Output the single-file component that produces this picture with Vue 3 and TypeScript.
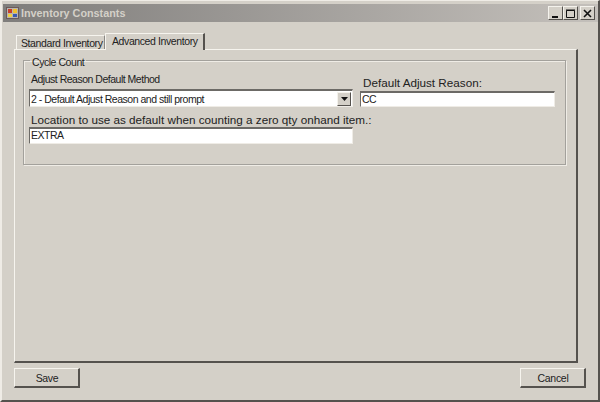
<script setup lang="ts">
const title = 'Inventory Constants'
const tabs = [
  { label: 'Standard Inventory', active: false },
  { label: 'Advanced Inventory', active: true },
]
</script>

<template>
  <div class="window">
    <header class="titlebar">
      <svg class="app-icon" width="13" height="12" viewBox="0 0 13 12">
        <rect x="0.5" y="0.5" width="12" height="11" fill="#b9b4b0" stroke="#6a5a5a" />
        <rect x="2" y="2" width="4" height="4" fill="#c8402c" />
        <rect x="7" y="2" width="4" height="4" fill="#f0c030" />
        <rect x="2" y="7" width="4" height="3" fill="#f0d040" />
        <rect x="7" y="7" width="4" height="3" fill="#3c5ab0" />
      </svg>
      <span class="title">{{ title }}</span>
      <div class="caption-btns">
        <button class="cap-btn">
          <svg width="9" height="9" viewBox="0 0 9 9"><rect x="1" y="7" width="6" height="2" fill="#111" /></svg>
        </button>
        <button class="cap-btn">
          <svg width="9" height="9" viewBox="0 0 9 9"><path d="M0.5 1.5h8v7h-8z M0 1h9" fill="none" stroke="#111" /></svg>
        </button>
        <button class="cap-btn close">
          <svg width="9" height="9" viewBox="0 0 9 9"><path d="M1 1l7 7M8 1l-7 7" fill="none" stroke="#111" stroke-width="1.6" /></svg>
        </button>
      </div>
    </header>

    <main class="client">
      <div class="tabstrip">
        <div v-for="t in tabs" :key="t.label" class="tab" :class="{ active: t.active }">{{ t.label }}</div>
      </div>

      <section class="tabpanel">
        <fieldset class="group">
          <legend>Cycle Count</legend>
          <div class="row-top">
            <div class="field-left">
              <label class="small">Adjust Reason Default Method</label>
              <div class="combo">
                <span class="combo-text">2 - Default Adjust Reason and still prompt</span>
                <span class="combo-arrow">
                  <svg width="7" height="4" viewBox="0 0 7 4"><path d="M0 0h7L3.5 4z" fill="#111" /></svg>
                </span>
              </div>
            </div>
            <div class="field-right">
              <label class="big">Default Adjust Reason:</label>
              <div class="textbox">CC</div>
            </div>
          </div>
          <div class="field-left second">
            <label class="big">Location to use as default when counting a zero qty onhand item.:</label>
            <div class="textbox">EXTRA</div>
          </div>
        </fieldset>
      </section>

      <footer class="actions">
        <button class="btn">Save</button>
        <button class="btn">Cancel</button>
      </footer>
    </main>
  </div>
</template>

<style>
html, body { margin: 0; background: #d4d0c8; }
</style>

<style scoped>
.window {
  box-sizing: border-box;
  width: 600px;
  height: 402px;
  display: flex;
  flex-direction: column;
  background: #d4d0c8;
  border-top: 1px solid #efece6;
  border-left: 2px solid #efece6;
  border-right: 2px solid #55524e;
  border-bottom: 2px solid #55524e;
  padding: 3px 0 0 1px;
  font-family: "Liberation Sans", Arial, sans-serif;
  color: #222;
}
.titlebar {
  flex: none;
  height: 18px;
  display: flex;
  align-items: center;
  background: linear-gradient(90deg, #7f7d7b, #c4c0bb);
  padding: 0 3px 0 3px;
}
.app-icon { flex: none; }
.title {
  margin-left: 2px;
  font: bold 10.8px "Liberation Sans", Arial, sans-serif;
  color: #d4d0c8;
}
.caption-btns {
  margin-left: auto;
  display: flex;
  gap: 0;
}
.cap-btn {
  box-sizing: border-box;
  width: 15px;
  height: 14px;
  padding: 0;
  display: flex;
  align-items: center;
  justify-content: center;
  background: #d4d0c8;
  border: 1px solid;
  border-color: #f4f2ec #55524e #55524e #f4f2ec;
}
.close { margin-left: 2px; }

.client {
  flex: 1;
  min-height: 0;
  display: flex;
  flex-direction: column;
  padding: 10px 12px 0 11px;
}
.tabstrip {
  flex: none;
  height: 17px;
  display: flex;
  align-items: flex-end;
  padding-left: 2px;
}
.tab {
  box-sizing: border-box;
  height: 14px;
  padding: 0 4px;
  font-size: 10.5px;
  letter-spacing: -0.4px;
  line-height: 14px;
  white-space: nowrap;
  border-top: 1px solid #f6f4ee;
  border-left: 1px solid #f6f4ee;
  border-right: 1px solid #8a8884;
  width: 89px;
}
.tab.active {
  width: 100px;
  height: 17px;
  line-height: 14px;
  padding-left: 6px;
  border-right: 2px solid #55524e;
  background: #d4d0c8;
  margin-bottom: -1px;
  position: relative;
  z-index: 1;
}
.tabpanel {
  box-sizing: border-box;
  flex: 1;
  min-height: 0;
  margin-right: 8px;
  border-top: 1px solid #f6f4ee;
  border-left: 1px solid #f6f4ee;
  border-right: 2px solid #55524e;
  border-bottom: 2px solid #55524e;
  padding: 2px 10px 0 8px;
}
.group {
  box-sizing: border-box;
  height: 113px;
  margin: 0;
  padding: 0 5px 0 5px;
  border: 1px solid #a3a19c;
  box-shadow: 1px 1px 0 #efece6, inset 1px 1px 0 #efece6;
}
legend {
  margin-left: 1px;
  padding: 4px 2px 0;
  font-size: 10.5px;
  letter-spacing: -0.45px;
  line-height: 12px;
}
.row-top {
  display: flex;
  align-items: flex-end;
  gap: 7px;
}
.field-left { width: 324px; flex: none; }
.field-right { width: 195px; flex: none; }
.field-right .big { margin-bottom: 1px; }
.small {
  display: block;
  padding-left: 2px;
  font-size: 10.5px;
  letter-spacing: -0.49px;
  line-height: 12px;
  margin-top: 5px;
  margin-bottom: 4px;
}
.big {
  display: block;
  padding-left: 3px;
  font-size: 11.7px;
  line-height: 14px;
  white-space: nowrap;
}
.second { margin-top: 5px; }
.second .big { padding-left: 2px; line-height: 15px; }
.second .textbox { height: 17px; }
.combo, .textbox {
  box-sizing: border-box;
  background: #fff;
  border-top: 2px solid #6c6a66;
  border-left: 1px solid #6c6a66;
  border-right: 1px solid #efece6;
  border-bottom: 1px solid #efece6;
  font-size: 10.5px;
  letter-spacing: -0.48px;
}
.combo {
  height: 18px;
  display: flex;
  align-items: center;
  padding-left: 1px;
}
.combo-text { flex: 1; }
.combo-arrow {
  box-sizing: border-box;
  width: 14px;
  height: 14px;
  margin-right: 1px;
  display: flex;
  align-items: center;
  justify-content: center;
  background: #d4d0c8;
  border: 1px solid;
  border-color: #f4f2ec #55524e #55524e #f4f2ec;
}
.textbox {
  height: 16px;
  line-height: 13px;
  padding-left: 1px;
}
.actions {
  flex: none;
  height: 37px;
  display: flex;
  justify-content: space-between;
  align-items: flex-start;
  padding-top: 5px;
  box-sizing: border-box;
}
.btn {
  box-sizing: border-box;
  width: 66px;
  height: 20px;
  padding: 0 0 0 1px;
  font: 10.5px "Liberation Sans", Arial, sans-serif;
  letter-spacing: -0.3px;
  color: #222;
  background: #d4d0c8;
  border: 1px solid;
  border-color: #f6f4ee #55524e #55524e #f6f4ee;
  border-width: 1px 2px 2px 1px;
}
</style>
